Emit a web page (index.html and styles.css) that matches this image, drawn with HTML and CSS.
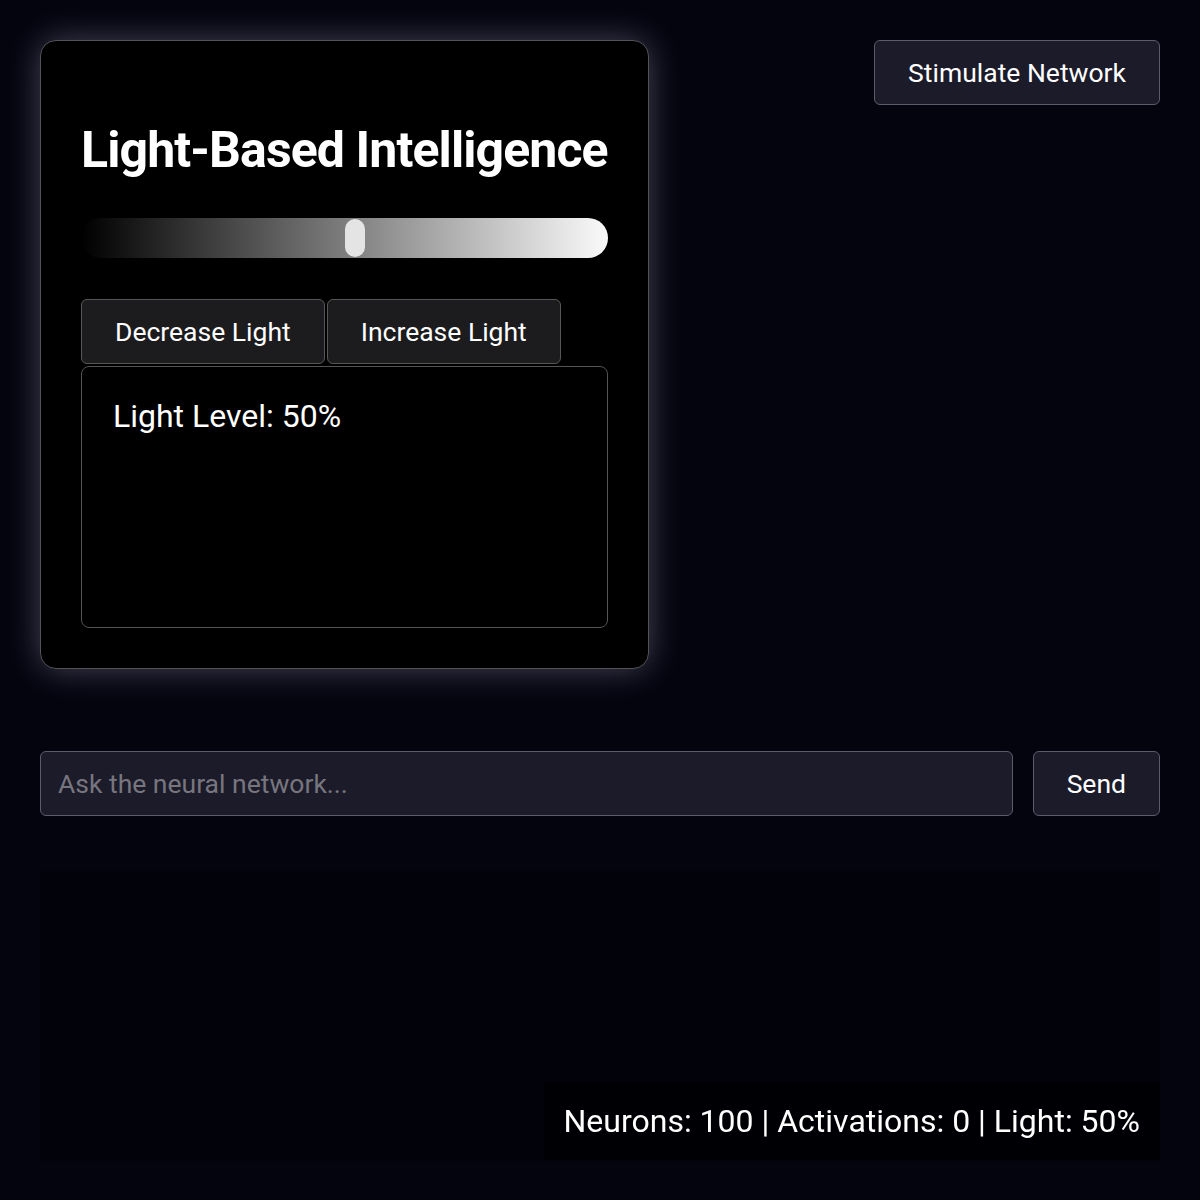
FILE: index.html
```html
<!DOCTYPE html>
<html lang="en">
  <head>
    <meta charset="UTF-8" />
    <meta name="viewport" content="width=device-width, initial-scale=1.0" />
    <title>Light-Based Intelligence</title>
    <link rel="stylesheet" href="styles.css">
  </head>
  <body>
    <div class="top-row">
      <div class="light-card">
        <h1>Light-Based Intelligence</h1>
        <input type="range" class="light-slider" id="light-slider" min="0" max="100" value="52" />
        <div class="button-container">
          <button class="light-button" id="decrease-button">Decrease Light</button>
          <button class="light-button" id="increase-button">Increase Light</button>
        </div>
        <div class="light-output" id="light-output">
          <p>Light Level: 50%</p>
        </div>
      </div>
      <button class="network-button" id="stimulate-button">Stimulate Network</button>
    </div>

    <div class="chat-input-row">
      <input type="text" class="chat-input" id="chat-input" placeholder="Ask the neural network..." />
      <button class="network-button" id="send-button">Send</button>
    </div>

    <div class="chat-history" id="chat-history"></div>

    <div class="stats" id="stats">Neurons: 100 | Activations: 0 | Light: 50%</div>
  </body>
</html>
```

FILE: styles.css
```css
body {
  font-family: Roboto, "Noto Sans", sans-serif;
  background-color: #04040f;
  color: white;
  margin: 0;
  padding: 40px;
}

.top-row {
  display: flex;
  justify-content: space-between;
  align-items: flex-start;
}

.light-card {
  width: 609px;
  box-sizing: border-box;
  padding: 40px;
  background-color: #000;
  border: 1px solid #525258;
  border-radius: 16px;
  box-shadow: 0 0 34px rgba(205, 205, 240, 0.32);
}

h1 {
  font-size: 50px;
  font-weight: bold;
  letter-spacing: -0.9px;
  line-height: 60px;
  white-space: nowrap;
  margin: 39px 0 38px;
}

.light-slider {
  -webkit-appearance: none;
  appearance: none;
  display: block;
  width: 100%;
  height: 40px;
  margin: 0;
  border-radius: 20px;
  background: linear-gradient(to right, #000, #fafafa);
  outline: none;
}

.light-slider::-webkit-slider-thumb {
  -webkit-appearance: none;
  width: 20px;
  height: 38px;
  border-radius: 10px;
  background-color: #e4e4e4;
  cursor: pointer;
}

.button-container {
  display: flex;
  gap: 2px;
  margin-top: 41px;
  margin-bottom: 2px;
}

button {
  font-family: Roboto, "Noto Sans", sans-serif;
  font-size: 26.5px;
  color: white;
  padding: 16px 33px;
  border-radius: 6px;
  cursor: pointer;
}

.light-button {
  background-color: #1c1c1e;
  border: 1px solid #575757;
}

.light-output {
  height: 262px;
  box-sizing: border-box;
  padding: 30px 31px;
  border: 1px solid #555;
  border-radius: 8px;
}

.light-output p {
  margin: 0;
  font-size: 32px;
}

.network-button {
  background-color: #1c1b2a;
  border: 1px solid #5c5b6c;
}

.chat-input-row {
  display: flex;
  gap: 20px;
  margin-top: 82px;
}

.chat-input {
  flex: 1;
  font-family: Roboto, "Noto Sans", sans-serif;
  font-size: 26.5px;
  color: white;
  padding: 16px 17px;
  background-color: #1c1b2a;
  border: 1px solid #5c5b6c;
  border-radius: 6px;
  outline: none;
}

.chat-input::placeholder {
  color: #77767f;
}

.chat-history {
  margin-top: 55px;
  height: 290px;
  background-color: rgba(0, 0, 0, 0.3);
}

.stats {
  position: fixed;
  right: 40px;
  bottom: 40px;
  padding: 20px;
  font-size: 32px;
  background-color: rgba(0, 0, 0, 0.6);
}
```
